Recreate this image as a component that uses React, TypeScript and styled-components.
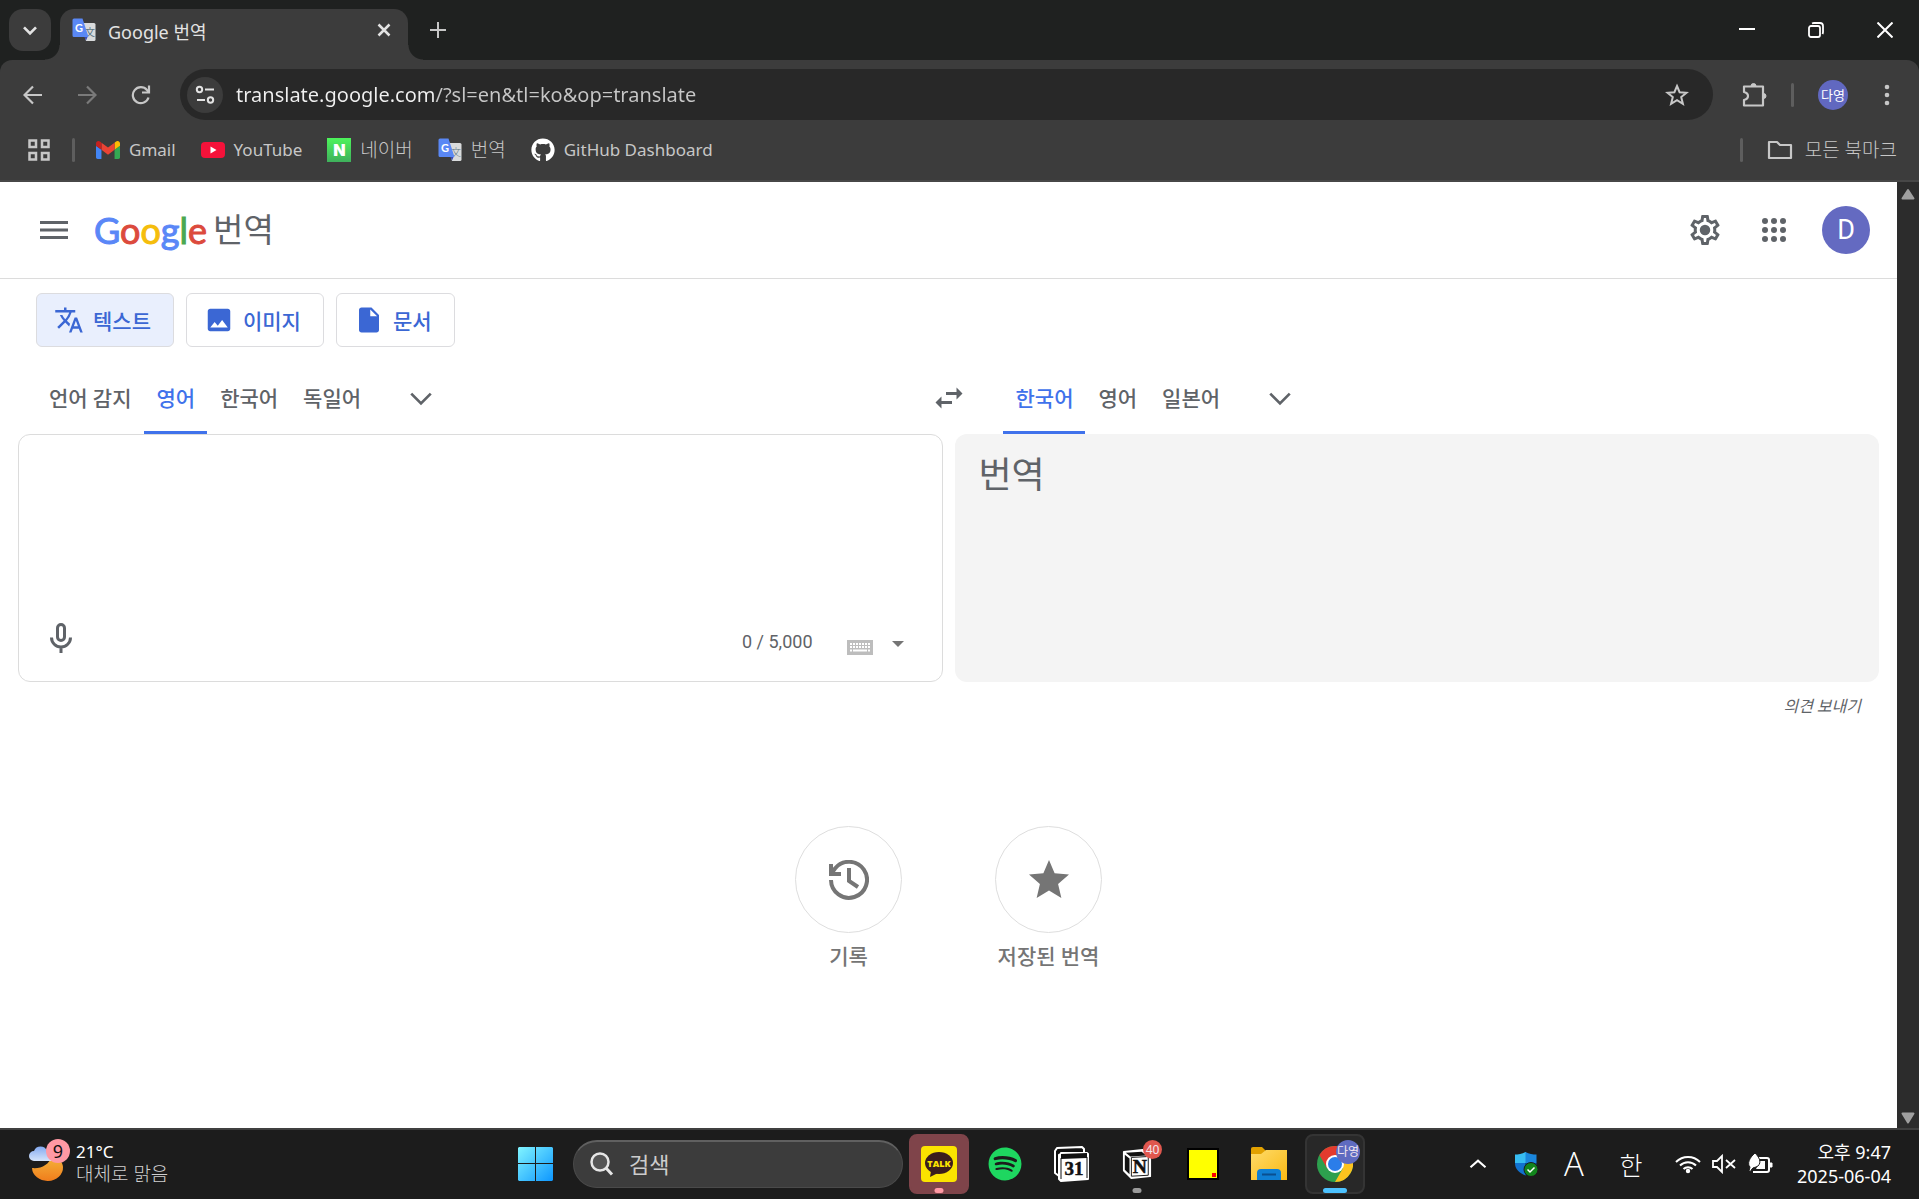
import React from "react";
import styled, { createGlobalStyle, css } from "styled-components";
import { FaGithub, FaSpotify } from "react-icons/fa";
import { MdTranslate, MdImage, MdInsertDriveFile, MdSwapHoriz, MdStar } from "react-icons/md";

const uiFont = `"Noto Sans", "Noto Sans CJK KR", sans-serif`;
const pageFont = `Roboto, "Noto Sans CJK KR", sans-serif`;

const GlobalStyle = createGlobalStyle`
  * { box-sizing: border-box; }
  body { margin: 0; background: #fff; font-family: ${pageFont}; }
  button, input, textarea { font: inherit; }
  svg { display: block; flex: none; }
`;

const Screen = styled.div`
  display: flex;
  flex-direction: column;
  height: 100vh;
`;

const plainButton = css`
  display: flex;
  align-items: center;
  justify-content: center;
  padding: 0;
  border: 0;
  background: none;
  color: inherit;
  cursor: pointer;
`;

/* ---------- browser chrome ---------- */

const TabStrip = styled.div`
  display: flex;
  align-items: flex-start;
  height: 60px;
  padding-left: 9px;
  background: #1f2120;
  color: #e3e3e3;
  font-family: ${uiFont};
`;

const TabSearch = styled.button`
  ${plainButton}
  width: 42px;
  height: 42px;
  margin: 9px 9px 0 0;
  border-radius: 14px;
  background: #3c3c3c;
`;

const Tab = styled.div`
  position: relative;
  display: flex;
  align-items: center;
  width: 348px;
  height: 51px;
  margin-top: 9px;
  padding: 0 12px 9px 12px;
  border-radius: 14px 14px 0 0;
  background: #3c3c3c;
  &::before,
  &::after {
    content: "";
    position: absolute;
    bottom: 0;
    width: 15px;
    height: 15px;
  }
  &::before {
    left: -15px;
    background: radial-gradient(circle at 0 0, transparent 14px, #3c3c3c 15px);
  }
  &::after {
    right: -15px;
    background: radial-gradient(circle at 100% 0, transparent 14px, #3c3c3c 15px);
  }
`;

const TabTitle = styled.span`
  flex: 1;
  margin-left: 12px;
  padding-top: 3px;
  font-size: 18px;
  line-height: 24px;
`;

const TabButton = styled.button`
  ${plainButton}
  width: 24px;
  height: 24px;
`;

const NewTab = styled.button`
  ${plainButton}
  width: 42px;
  height: 42px;
  margin: 9px 0 0 9px;
`;

const WindowControls = styled.div`
  display: flex;
  margin-left: auto;
  color: #fff;
`;

const WindowButton = styled.button`
  ${plainButton}
  width: 69px;
  height: 59px;
`;

const Chrome = styled.div`
  background: #1f2120;
  font-family: ${uiFont};
`;

const ChromeInner = styled.div`
  border-bottom: 2px solid #474747;
  border-radius: 12px 12px 0 0;
  background: #3c3c3c;
  color: #c7c7c7;
`;

const AddressRow = styled.div`
  display: flex;
  align-items: center;
  height: 69px;
  padding: 0 26px 0 6px;
`;

const NavButton = styled.button<{ $dim?: boolean }>`
  ${plainButton}
  width: 54px;
  height: 42px;
  color: ${(p) => (p.$dim ? "#7a7a7a" : "#c7c7c7")};
`;

const Omnibox = styled.label`
  display: flex;
  flex: 1;
  align-items: center;
  height: 51px;
  margin: 0 29px 0 12px;
  padding: 0 24px 0 7px;
  border-radius: 26px;
  background: #282828;
`;

const SiteInfo = styled.button`
  ${plainButton}
  width: 36px;
  height: 36px;
  border-radius: 50%;
  background: #3c3c3c;
`;

const Address = styled.input`
  flex: 1;
  margin: 0 0 0 13px;
  padding: 0;
  border: 0;
  outline: 0;
  background: linear-gradient(90deg, #f0f0f0 199px, #c7c7c7 199px);
  background-clip: text;
  -webkit-background-clip: text;
  color: transparent;
  font-size: 20px;
  line-height: 30px;
`;

const IconButton = styled.button<{ $w: number }>`
  ${plainButton}
  width: ${(p) => p.$w}px;
  height: 42px;
`;

const Divider = styled.span<{ $left?: number; $right?: number }>`
  width: 3px;
  height: 24px;
  margin-left: ${(p) => p.$left ?? 0}px;
  margin-right: ${(p) => p.$right ?? 0}px;
  border-radius: 2px;
  background: #5e5e5e;
`;

const ProfileChip = styled.button`
  ${plainButton}
  width: 30px;
  height: 30px;
  margin-right: 33px;
  border-radius: 50%;
  background: #6168c0;
  color: #fff;
  font-size: 13px;
`;

const BookmarkBar = styled.nav`
  display: flex;
  align-items: center;
  height: 51px;
  padding: 0 22px 9px 27px;
`;

const Bookmarks = styled.div`
  display: flex;
  gap: 25px;
  margin-right: auto;
`;

const Bookmark = styled.a<{ $korean?: boolean }>`
  display: flex;
  align-items: center;
  gap: 9px;
  color: #c7c7c7;
  font-size: ${(p) => (p.$korean ? 19 : 17)}px;
  font-weight: ${(p) => (p.$korean ? 300 : 400)};
  line-height: 24px;
  text-decoration: none;
`;

const NaverMark = styled.span`
  display: grid;
  place-items: center;
  width: 24px;
  height: 24px;
  background: linear-gradient(#4df45b, #3fb05c);
  color: #fff;
  font: 900 16px/24px Inter, sans-serif;
`;

const AllBookmarks = styled.button`
  ${plainButton}
  gap: 12px;
  font-size: 19px;
  font-weight: 300;
  line-height: 24px;
`;

/* ---------- translate page ---------- */

const Viewport = styled.div`
  display: flex;
  flex: 1;
  min-height: 0;
`;

const Page = styled.div`
  flex: 1;
  background: #fff;
  color: #5f6368;
`;

const ScrollTrack = styled.div`
  display: flex;
  flex-direction: column;
  align-items: center;
  justify-content: space-between;
  width: 22px;
  padding: 6px 0 4px;
  background: #2c2c2c;
`;

const Header = styled.header`
  display: flex;
  align-items: center;
  height: 97px;
  padding: 0 27px 0 36px;
  border-bottom: 1px solid #dcdcdc;
`;

const MenuButton = styled.button`
  ${plainButton}
  width: 36px;
  height: 36px;
`;

const Brand = styled.a`
  display: flex;
  align-items: center;
  gap: 6px;
  margin: 0 auto 0 22px;
  color: #5f6368;
  text-decoration: none;
`;

const GoogleWord = styled.span`
  font: 400 36px/48px Lato, sans-serif;
  -webkit-text-stroke: 1px currentColor;
  color: #5a87f7;
`;

const Tint = styled.span<{ $c: string }>`
  color: ${(p) => p.$c};
`;

const ProductName = styled.span`
  padding-top: 2px;
  font-size: 33px;
  line-height: 48px;
`;

const HeaderButton = styled.button`
  ${plainButton}
  width: 69px;
  height: 60px;
`;

const Account = styled.button`
  ${plainButton}
  width: 48px;
  height: 48px;
  margin-left: 14px;
  border-radius: 50%;
  background: #646ac1;
  color: #fff;
  font-size: 27px;
`;

const ModeRow = styled.div`
  display: flex;
  gap: 12px;
  padding: 14px 36px 0;
`;

const ModeButton = styled.button<{ $active?: boolean }>`
  ${plainButton}
  gap: 9px;
  height: 54px;
  padding: 0 22px 0 17px;
  border: 1px solid #dcdcdf;
  border-radius: 6px;
  background: ${(p) => (p.$active ? "#e9effd" : "#fff")};
  color: #3b67d4;
  font-size: 21px;
  font-weight: 500;
`;

const LanguageRow = styled.div`
  display: grid;
  grid-template-columns: 1fr 108px 1fr;
  height: 72px;
  margin-top: 15px;
`;

const LanguageList = styled.div<{ $first?: boolean }>`
  display: flex;
  padding-left: ${(p) => (p.$first ? 36 : 0)}px;
`;

const Language = styled.button<{ $active?: boolean }>`
  ${plainButton}
  padding: 0 12px 0 13px;
  border-bottom: 3px solid ${(p) => (p.$active ? "#4072eb" : "transparent")};
  color: ${(p) => (p.$active ? "#4072eb" : "#5f6368")};
  font-size: 21px;
  font-weight: 500;
`;

const MoreLanguages = styled.button`
  ${plainButton}
  width: 72px;
  margin-left: 12px;
`;

const Swap = styled.button`
  ${plainButton}
`;

const Panels = styled.div`
  display: grid;
  grid-template-columns: 1fr 1fr;
  gap: 12px;
  padding: 0 18px;
`;

const Source = styled.section`
  display: flex;
  flex-direction: column;
  height: 248px;
  border: 1px solid #dcdcdc;
  border-radius: 12px;
`;

const SourceText = styled.textarea`
  flex: 1;
  margin: 0;
  padding: 12px 24px;
  border: 0;
  outline: 0;
  border-radius: 12px;
  resize: none;
  background: none;
  font-size: 36px;
`;

const SourceTools = styled.div`
  display: flex;
  align-items: center;
  height: 80px;
  padding: 0 24px 0 15px;
`;

const MicButton = styled.button`
  ${plainButton}
  width: 54px;
  height: 54px;
  margin: 0 auto 6px 0;
`;

const Counter = styled.span`
  margin-right: 29px;
  padding-top: 2px;
  font-size: 18px;
  line-height: 24px;
`;

const InputTools = styled.div`
  display: flex;
  padding-top: 12px;
`;

const ToolButton = styled.button<{ $w: number }>`
  ${plainButton}
  width: ${(p) => p.$w}px;
  height: 36px;
`;

const Target = styled.section`
  padding: 18px 24px;
  border-radius: 12px;
  background: #f4f4f4;
  font-size: 36px;
  line-height: 48px;
`;

const FeedbackRow = styled.div`
  display: flex;
  align-items: center;
  justify-content: flex-end;
  height: 48px;
  padding: 2px 36px 0 0;
`;

const Feedback = styled.a`
  color: #5f6368;
  font-size: 16px;
  font-style: italic;
  line-height: 24px;
  text-decoration: none;
`;

const Shortcuts = styled.div`
  display: flex;
  justify-content: center;
  padding-top: 96px;
`;

const Shortcut = styled.button`
  ${plainButton}
  flex-direction: column;
  gap: 8px;
  width: 200px;
  color: #757575;
  font-size: 21px;
  font-weight: 500;
  line-height: 32px;
`;

const Disc = styled.span`
  display: grid;
  place-items: center;
  width: 107px;
  height: 107px;
  border: 1px solid #dedede;
  border-radius: 50%;
`;

/* ---------- desktop taskbar ---------- */

const Taskbar = styled.footer`
  display: grid;
  grid-template-columns: 1fr auto 554px;
  align-items: center;
  height: 71px;
  padding-bottom: 2px;
  border-top: 2px solid #404040;
  background: #1c1c1c;
  color: #fff;
  font-family: ${uiFont};
  font-size: 18px;
`;

const Weather = styled.button`
  ${plainButton}
  justify-content: flex-start;
  gap: 6px;
  padding: 0 0 2px 26px;
  text-align: left;
  font-size: 17px;
  line-height: 23px;
`;

const WeatherIcon = styled.span`
  position: relative;
  width: 44px;
  height: 48px;
  padding-top: 7px;
`;

const CountBadge = styled.span`
  position: absolute;
  top: 0;
  right: 0;
  width: 24px;
  height: 24px;
  border-radius: 50%;
  background: #ff99a4;
  color: #111;
  font-size: 18px;
  line-height: 24px;
  text-align: center;
`;

const Lines = styled.span`
  display: flex;
  flex-direction: column;
`;

const Muted = styled.span`
  color: #d0d0d0;
  font-size: 19px;
  font-weight: 300;
`;

const Apps = styled.div`
  display: flex;
  align-items: center;
  gap: 6px;
`;

const SearchBox = styled.label`
  display: flex;
  align-items: center;
  gap: 15px;
  width: 330px;
  height: 48px;
  margin-left: 1px;
  padding: 0 16px;
  border: 1px solid #4a4a4a;
  border-top: 2px solid #606060;
  border-radius: 24px;
  background: #3c3c3c;
`;

const SearchInput = styled.input`
  width: 100%;
  padding: 0;
  border: 0;
  outline: 0;
  background: none;
  color: #fff;
  font-size: 22px;
  line-height: 30px;
  &::placeholder {
    color: #cccccc;
    opacity: 1;
  }
`;

const AppTile = styled.button<{ $bg?: string; $edge?: string }>`
  ${plainButton}
  position: relative;
  width: 60px;
  height: 60px;
  border: 2px solid ${(p) => p.$edge ?? "transparent"};
  border-radius: 8px;
  background: ${(p) => p.$bg ?? "none"};
`;

const Indicator = styled.span<{ $w: number; $c: string }>`
  position: absolute;
  bottom: -1px;
  left: 50%;
  width: ${(p) => p.$w}px;
  height: 5px;
  border-radius: 3px;
  background: ${(p) => p.$c};
  transform: translateX(-50%);
`;

const AppBadge = styled.span<{ $bg: string; $size: number }>`
  position: absolute;
  top: 4px;
  right: 3px;
  width: ${(p) => p.$size}px;
  height: ${(p) => p.$size}px;
  border-radius: 50%;
  background: ${(p) => p.$bg};
  color: #f3e6ee;
  font-size: 12px;
  line-height: ${(p) => p.$size}px;
  text-align: center;
`;

const Tray = styled.div`
  display: flex;
  align-items: center;
  justify-content: flex-end;
  padding-right: 28px;
`;

const TrayButton = styled.button<{ $w: number }>`
  ${plainButton}
  width: ${(p) => p.$w}px;
  height: 48px;
`;

const Latin = styled.span`
  font: 300 33px/48px "Open Sans", sans-serif;
`;

const Hangul = styled.span`
  font: 300 25px/48px "Noto Sans CJK KR", sans-serif;
`;

const Clock = styled.button`
  ${plainButton}
  flex-direction: column;
  align-items: flex-end;
  width: 107px;
  font-size: 18px;
  line-height: 24px;
`;

/* ---------- drawings ---------- */

const Chevron = ({ size, w, up }: { size: number; w: number; up?: boolean }) => (
  <svg width={size} height={size} viewBox="0 0 24 24" fill="none" stroke="currentColor" strokeWidth={w}>
    <path d={up ? "M3 16l9-8 9 8" : "M3 8l9 9 9-9"} />
  </svg>
);

const TranslateMark = () => (
  <svg width="24" height="24" viewBox="0 0 24 24">
    <path d="M9 5h13a1.500 1.500 0 0 1 1.500 1.500v15a1.500 1.500 0 0 1-1.500 1.500H14z" fill="#d9dbdc" />
    <text x="13" y="18" fontSize="10" fill="#5d7580" fontFamily="Noto Sans CJK KR">文</text>
    <path d="M12 18l4 0-2 4.500z" fill="#3a4bb5" />
    <path d="M2 .5h8.500L16.500 19H2A1.500 1.500 0 0 1 .5 17.500V2A1.500 1.500 0 0 1 2 .5z" fill="#5a88f5" />
    <text x="3" y="13.500" fontSize="11" fontWeight="700" fill="#fff" fontFamily="Lato">G</text>
  </svg>
);

const GmailMark = () => (
  <svg width="24" height="18" viewBox="52 42 88 66">
    <path fill="#4285f4" d="M58 108h14V74L52 59v43c0 3.320 2.690 6 6 6" />
    <path fill="#34a853" d="M120 108h14c3.320 0 6-2.690 6-6V59l-20 15" />
    <path fill="#fbbc04" d="M120 48v26l20-15v-8c0-7.420-8.470-11.650-14.400-7.200" />
    <path fill="#ea4335" d="M72 74V48l24 18 24-18v26L96 92" />
    <path fill="#c5221f" d="M52 51v8l20 15V48l-5.600-4.200c-5.940-4.450-14.400-.22-14.400 7.200" />
  </svg>
);

const YouTubeMark = () => (
  <svg width="24" height="18" viewBox="0 0 24 18">
    <rect y="1" width="24" height="16" rx="4" fill="#f5123a" />
    <path d="M9.500 5.500v7l6-3.500z" fill="#fff" />
  </svg>
);

const GearIcon = () => (
  <svg width="36" height="36" viewBox="0 0 24 24" fill="currentColor">
    <path d="M19.430 12.980c.04-.32.07-.64.07-.98 0-.34-.03-.66-.07-.98l2.110-1.650c.19-.15.24-.42.12-.64l-2-3.460c-.09-.16-.26-.25-.44-.25-.06 0-.12.01-.17.03l-2.490 1c-.52-.4-1.080-.73-1.690-.98l-.38-2.650C14.460 2.180 14.250 2 14 2h-4c-.25 0-.46.18-.49.42l-.38 2.650c-.61.25-1.170.59-1.690.98l-2.490-1c-.06-.02-.12-.03-.18-.03-.17 0-.34.09-.43.25l-2 3.460c-.13.22-.07.49.12.64l2.110 1.650c-.04.32-.07.65-.07.98 0 .33.03.66.07.98l-2.110 1.650c-.19.15-.24.42-.12.64l2 3.460c.09.16.26.25.44.25.06 0 .12-.01.17-.03l2.490-1c.52.4 1.080.73 1.690.98l.38 2.650c.03.24.24.42.49.42h4c.25 0 .46-.18.49-.42l.38-2.650c.61-.25 1.170-.59 1.690-.98l2.490 1c.06.02.12.03.18.03.17 0 .34-.09.43-.25l2-3.460c.12-.22.07-.49-.12-.64l-2.110-1.650zm-1.980-1.710c.04.31.05.52.05.73 0 .21-.02.43-.05.73l-.14 1.130.89.7 1.080.84-.7 1.210-1.270-.51-1.040-.42-.9.68c-.43.32-.84.56-1.250.73l-1.060.43-.16 1.130-.2 1.350h-1.400l-.19-1.350-.16-1.130-1.060-.43c-.43-.18-.83-.41-1.230-.71l-.91-.7-1.060.43-1.270.51-.7-1.210 1.080-.84.89-.7-.14-1.130c-.03-.31-.05-.54-.05-.74s.02-.43.05-.73l.14-1.130-.89-.7-1.080-.84.7-1.210 1.270.51 1.040.42.9-.68c.43-.32.84-.56 1.250-.73l1.060-.43.16-1.130.2-1.350h1.390l.19 1.350.16 1.130 1.060.43c.43.18.83.41 1.230.71l.91.7 1.060-.43 1.270-.51.7 1.210-1.070.85-.89.7.14 1.130z" />
    <circle cx="12" cy="12" r="3.500" />
  </svg>
);

const AppsIcon = () => (
  <svg width="24" height="24" viewBox="0 0 24 24" fill="currentColor">
    {[3, 12, 21].map((y) => [3, 12, 21].map((x) => <circle key={`${x}-${y}`} cx={x} cy={y} r="3" />))}
  </svg>
);

const MicIcon = () => (
  <svg width="24" height="30" viewBox="0 0 24 30" fill="none" stroke="currentColor" strokeWidth="3">
    <rect x="8.500" y="1.500" width="7" height="16" rx="3.500" />
    <path d="M2.500 14.500a9.500 9.500 0 0 0 19 0M12 24v6" />
  </svg>
);

const HistoryIcon = () => (
  <svg width="40" height="40" viewBox="0 0 40 40" fill="none" stroke="currentColor" strokeWidth="4">
    <path d="M2 20a18 18 0 1 0 4-11.500L2 14" />
    <path d="M2 4v10h10M20 8v13l9 6" />
  </svg>
);

const KeyboardIcon = () => (
  <svg width="26" height="15" viewBox="0 0 26 15">
    <rect width="26" height="15" fill="#bdbdbd" />
    <path d="M3 4h20M3 7h20" stroke="#fff" strokeWidth="2" strokeDasharray="2 1" />
    <path d="M3 10.500h2M6 10.500h14M21 10.500h2" stroke="#fff" strokeWidth="2" />
  </svg>
);

const WeatherArt = () => (
  <svg width="40" height="38" viewBox="0 0 40 38">
    <defs>
      <linearGradient id="moon" x1="0" y1="0" x2="0" y2="1">
        <stop offset="0" stopColor="#f4b63c" />
        <stop offset="1" stopColor="#f07d1c" />
      </linearGradient>
      <linearGradient id="cloud" x1="0" y1="0" x2="0" y2="1">
        <stop offset="0" stopColor="#84aaf0" />
        <stop offset="1" stopColor="#d5e4fb" />
      </linearGradient>
    </defs>
    <path d="M6 22c9 1 17-3 20-12 7 1 11 7 11 11a15 13 0 0 1-31 1z" fill="url(#moon)" />
    <path d="M8 15a5 5 0 0 1 0-10 7 7 0 0 1 13 0 5 5 0 0 1 4 10z" fill="url(#cloud)" />
  </svg>
);

const WindowsMark = () => (
  <svg width="36" height="36" viewBox="0 0 36 36">
    <defs>
      <linearGradient id="win" gradientUnits="userSpaceOnUse" x1="0" y1="0" x2="36" y2="36">
        <stop offset="0" stopColor="#83f6ff" />
        <stop offset="1" stopColor="#0a94ff" />
      </linearGradient>
    </defs>
    <path d="M1 1h16v16H0V2zM18 1h16l1 1v15H18zM0 18h17v17H1l-1-1zM18 18h17v16l-1 1H18z" fill="url(#win)" />
  </svg>
);

const TalkMark = () => (
  <svg width="36" height="36" viewBox="0 0 36 36">
    <rect width="36" height="36" rx="4" fill="#fbe300" />
    <ellipse cx="18" cy="17" rx="14" ry="11" fill="#3b1d1d" />
    <path d="M10 25l-1 6 8-4z" fill="#3b1d1d" />
    <text x="18" y="20.500" fontSize="9" fontWeight="800" textAnchor="middle" fill="#fbe300" fontFamily="Open Sans">TALK</text>
  </svg>
);

const CalendarMark = () => (
  <svg width="36" height="36" viewBox="0 0 36 36">
    <path d="M4 2l25-1 2 2v4H8L6 30l-4-3V5z" fill="#111" stroke="#fff" strokeWidth="2" strokeLinejoin="round" />
    <path d="M8 8l26-1 1 1v25l-27 2-2-2V9z" fill="#fff" stroke="#fff" strokeWidth="2" strokeLinejoin="round" />
    <path d="M8 8l26-1v5L8 13z" fill="#111" />
    <path d="M8 12v21M34 11v21" stroke="#111" strokeWidth="1" />
    <text x="21" y="29" fontSize="19" fontWeight="700" textAnchor="middle" fill="#111" stroke="#111" strokeWidth=".5" fontFamily="Liberation Serif">31</text>
  </svg>
);

const NotionMark = () => (
  <svg width="30" height="30" viewBox="0 0 32 32">
    <path d="M2 3l20-2 8 6v22l-20 2-8-8z" fill="#fff" stroke="#fff" strokeWidth="2" strokeLinejoin="round" />
    <path d="M4 4l17-1 5 4-17 1zM3 6l5 4v17l-5-5z" fill="#111" />
    <path d="M10 9l18-1v20l-18 1z" fill="#fff" stroke="#111" strokeWidth="1" />
    <text x="19" y="26" fontSize="21" fontWeight="700" textAnchor="middle" fill="#111" stroke="#111" strokeWidth=".5" fontFamily="Liberation Serif">N</text>
  </svg>
);

const NoteMark = () => (
  <svg width="32" height="32" viewBox="0 0 32 32">
    <rect width="32" height="32" fill="#000" />
    <rect x="2" y="2" width="28" height="28" fill="#ffff00" />
    <rect x="25" y="25" width="4" height="4" fill="#f00" />
  </svg>
);

const FolderMark = () => (
  <svg width="36" height="34" viewBox="0 0 36 34">
    <defs>
      <linearGradient id="folder" x1="0" y1="0" x2="1" y2="1">
        <stop offset="0" stopColor="#ffdc6a" />
        <stop offset="1" stopColor="#f9b813" />
      </linearGradient>
    </defs>
    <path d="M0 1.500Q0 0 2 0h9l4 4v6H0z" fill="#e2a100" />
    <path d="M0 7h10l5-4h21v30H0z" fill="url(#folder)" />
    <path d="M6 33v-7q0-4 4-4h16q4 0 4 4v7z" fill="#0f7fd4" />
    <path d="M11 27.500h14" stroke="#0a4f8f" strokeWidth="2" />
  </svg>
);

const ChromeMark = () => (
  <svg width="36" height="36" viewBox="0 0 36 36">
    <circle cx="18" cy="18" r="18" fill="#2da04e" />
    <path d="M18 18L2.400 9A18 18 0 0 1 33.600 9H18z" fill="#e33b2e" />
    <path d="M2.400 9l7.800 13.500L18 9z" fill="#e33b2e" />
    <path d="M18 9h15.600A18 18 0 0 1 18 36l7.800-13.500z" fill="#fcc31e" />
    <circle cx="18" cy="18" r="9" fill="#fff" />
    <circle cx="18" cy="18" r="7" fill="#2b7de9" />
  </svg>
);

const ShieldMark = () => (
  <svg width="24" height="26" viewBox="0 0 24 26">
    <path d="M11.500 1C8 3 4 3.500 1 3.500V12h11V1z" fill="#37bdf2" />
    <path d="M11.500 1C15 3 19 3.500 22.500 3.500V12h-11z" fill="#1a86dc" />
    <path d="M1 12h10.500v12.500C5 22 1 18 1 12z" fill="#1272cf" />
    <path d="M11.500 12h11c0 6-4 10-11 12.500z" fill="#0c59a4" />
    <circle cx="17" cy="18.500" r="7" fill="#12851c" stroke="#1c1c1c" />
    <path d="M13.500 18.500l2.500 2.500 4.500-4.500" stroke="#fff" strokeWidth="1.500" fill="none" />
  </svg>
);

const WifiIcon = () => (
  <svg width="26" height="20" viewBox="0 0 26 20" fill="none" stroke="#fff" strokeWidth="2">
    <path d="M1 8a17 17 0 0 1 24 0M5 11.500a11.500 11.500 0 0 1 16 0M8.500 15a6.500 6.500 0 0 1 9 0" />
    <circle cx="13" cy="17" r="1.200" fill="#fff" />
  </svg>
);

const MutedIcon = () => (
  <svg width="24" height="20" viewBox="0 0 24 20" fill="none" stroke="#fff" strokeWidth="1.800">
    <path d="M1 7v6h4l5 5V2L5 7zM14 6l9 8M23 6l-9 8" />
  </svg>
);

const BatteryIcon = () => (
  <svg width="26" height="22" viewBox="0 0 26 22">
    <path d="M12 5h8q2 0 2 2v10q0 2-2 2H6" fill="none" stroke="#fff" strokeWidth="2" />
    <path d="M23 10h2v4h-2z" fill="#fff" stroke="#fff" />
    <path d="M13 8h5v8H9z" fill="#fff" />
    <path d="M8 0c4 4 7 9 3 13-3 2-5 1-6 3l-2 3-1-1 1-4C0 11 2 5 8 0z" fill="#fff" stroke="#1c1c1c" />
  </svg>
);

const bookmarks = [
  { name: "Gmail", icon: <GmailMark /> },
  { name: "YouTube", icon: <YouTubeMark /> },
  { name: "네이버", korean: true, icon: <NaverMark aria-hidden>N</NaverMark> },
  { name: "번역", korean: true, icon: <TranslateMark /> },
  { name: "GitHub Dashboard", icon: <FaGithub size={24} color="#fff" /> },
];

function BrowserChrome() {
  return (
    <>
      <TabStrip>
        <TabSearch aria-label="탭 검색"><Chevron size={16} w={4} /></TabSearch>
        <Tab>
          <TranslateMark />
          <TabTitle>Google 번역</TabTitle>
          <TabButton aria-label="탭 닫기">
            <svg width="14" height="14" viewBox="0 0 14 14" stroke="currentColor" strokeWidth="2.500"><path d="M1.500 1.500l11 11M12.500 1.500l-11 11" /></svg>
          </TabButton>
        </Tab>
        <NewTab aria-label="새 탭">
          <svg width="16" height="16" viewBox="0 0 16 16" stroke="#c7c7c7" strokeWidth="2"><path d="M8 0v16M0 8h16" /></svg>
        </NewTab>
        <WindowControls>
          <WindowButton aria-label="최소화">
            <svg width="16" height="16" viewBox="0 0 16 16" stroke="currentColor" strokeWidth="2"><path d="M0 7h16" /></svg>
          </WindowButton>
          <WindowButton aria-label="이전 크기로 복원">
            <svg width="16" height="16" viewBox="0 0 16 16" fill="none" stroke="currentColor" strokeWidth="1.800">
              <rect x="1" y="4" width="11" height="11" rx="2" />
              <path d="M4 1.500Q5 1 6 1h6q3 0 3 3v6q0 1-.5 2" />
            </svg>
          </WindowButton>
          <WindowButton aria-label="닫기">
            <svg width="16" height="16" viewBox="0 0 16 16" stroke="currentColor" strokeWidth="2"><path d="M.5.5l15 15M15.500.5l-15 15" /></svg>
          </WindowButton>
        </WindowControls>
      </TabStrip>
      <Chrome>
        <ChromeInner>
          <AddressRow>
            <NavButton aria-label="뒤로">
              <svg width="20" height="20" viewBox="0 0 20 20" fill="none" stroke="currentColor" strokeWidth="2.200"><path d="M19 10H2M10 1.500L1.500 10l8.500 8.500" /></svg>
            </NavButton>
            <NavButton $dim aria-label="앞으로">
              <svg width="20" height="20" viewBox="0 0 20 20" fill="none" stroke="currentColor" strokeWidth="2.200"><path d="M1 10h17M10 1.500l8.500 8.500-8.500 8.500" /></svg>
            </NavButton>
            <NavButton aria-label="새로고침">
              <svg width="20" height="20" viewBox="0 0 20 20" fill="none" stroke="currentColor" strokeWidth="2.200"><path d="M17.500 12.500A8 8 0 1 1 16 5l2 2M18 .5V7.500H11" /></svg>
            </NavButton>
            <Omnibox>
              <SiteInfo aria-label="사이트 정보">
                <svg width="20" height="20" viewBox="0 0 20 20" fill="none" stroke="#e3e3e3" strokeWidth="2">
                  <circle cx="4.500" cy="4.500" r="2.700" /><path d="M10 4.500h9M2 15h8" /><circle cx="15.500" cy="15" r="2.700" />
                </svg>
              </SiteInfo>
              <Address aria-label="주소창" defaultValue="translate.google.com/?sl=en&tl=ko&op=translate" />
              <TabButton aria-label="북마크에 추가">
                <svg width="24" height="24" viewBox="0 0 24 24" fill="none" stroke="currentColor" strokeWidth="2"><path d="M12 3l2.600 6.200 6.900.5-5.300 4.400 1.700 6.700L12 17.200l-5.900 3.600 1.700-6.700L2.500 9.700l6.900-.5z" /></svg>
              </TabButton>
            </Omnibox>
            <IconButton $w={24} aria-label="확장 프로그램">
              <svg width="26" height="26" viewBox="0 0 26 26" fill="none" stroke="currentColor" strokeWidth="2.200" strokeLinejoin="round">
                <path d="M3 4.500h19v19H3v-5.500q4-1 4-4t-4-4z" />
                <path d="M10 4a2.500 2.500 0 0 1 5 0zM22.500 11.500a2.500 2.500 0 0 1 0 5z" fill="currentColor" stroke="currentColor" strokeWidth="1" />
              </svg>
            </IconButton>
            <Divider $left={25} $right={24} />
            <ProfileChip>다영</ProfileChip>
            <IconButton $w={12} aria-label="메뉴">
              <svg width="6" height="22" viewBox="0 0 6 22" fill="currentColor"><circle cx="3" cy="3" r="2.300" /><circle cx="3" cy="11" r="2.300" /><circle cx="3" cy="19" r="2.300" /></svg>
            </IconButton>
          </AddressRow>
          <BookmarkBar>
            <IconButton $w={24} aria-label="탭 그룹">
              <svg width="22" height="22" viewBox="0 0 22 22" fill="none" stroke="currentColor" strokeWidth="2.500">
                <path d="M1.500 1.500h6.500v6.500H1.500zM14 1.500h6.500v6.500H14zM1.500 14h6.500v6.500H1.500zM14 14h6.500v6.500H14z" />
              </svg>
            </IconButton>
            <Divider $left={21} $right={21} />
            <Bookmarks>
              {bookmarks.map((b) => (
                <Bookmark key={b.name} href="#" $korean={b.korean}>{b.icon}<span>{b.name}</span></Bookmark>
              ))}
            </Bookmarks>
            <Divider $right={24} />
            <AllBookmarks>
              <svg width="26" height="20" viewBox="0 0 26 20" fill="none" stroke="currentColor" strokeWidth="2.200" strokeLinejoin="round"><path d="M2 2h8l3 3h11v13H2z" /></svg>
              모든 북마크
            </AllBookmarks>
          </BookmarkBar>
        </ChromeInner>
      </Chrome>
    </>
  );
}

function TranslatePage() {
  return (
    <Page>
      <Header>
        <MenuButton aria-label="기본 메뉴">
          <svg width="28" height="18" viewBox="0 0 28 18" stroke="currentColor" strokeWidth="3"><path d="M0 1.500h28M0 9h28M0 16.500h28" /></svg>
        </MenuButton>
        <Brand href="#">
          <GoogleWord>
            G<Tint $c="#dc4a3d">o</Tint><Tint $c="#f5bd0c">o</Tint>g<Tint $c="#4aa851">l</Tint><Tint $c="#dc4a3d">e</Tint>
          </GoogleWord>
          <ProductName>번역</ProductName>
        </Brand>
        <HeaderButton aria-label="설정"><GearIcon /></HeaderButton>
        <HeaderButton aria-label="Google 앱"><AppsIcon /></HeaderButton>
        <Account aria-label="Google 계정">D</Account>
      </Header>
      <ModeRow>
        <ModeButton $active><MdTranslate size={30} />텍스트</ModeButton>
        <ModeButton><MdImage size={30} />이미지</ModeButton>
        <ModeButton><MdInsertDriveFile size={30} />문서</ModeButton>
      </ModeRow>
      <LanguageRow>
        <LanguageList $first>
          <Language>언어 감지</Language>
          <Language $active>영어</Language>
          <Language>한국어</Language>
          <Language>독일어</Language>
          <MoreLanguages aria-label="출발어 더보기"><Chevron size={26} w={2.5} /></MoreLanguages>
        </LanguageList>
        <Swap aria-label="언어 전환"><MdSwapHoriz size={36} /></Swap>
        <LanguageList>
          <Language $active>한국어</Language>
          <Language>영어</Language>
          <Language>일본어</Language>
          <MoreLanguages aria-label="도착어 더보기"><Chevron size={26} w={2.5} /></MoreLanguages>
        </LanguageList>
      </LanguageRow>
      <Panels>
        <Source>
          <SourceText aria-label="원본 텍스트" />
          <SourceTools>
            <MicButton aria-label="음성으로 번역"><MicIcon /></MicButton>
            <Counter>0 / 5,000</Counter>
            <InputTools>
              <ToolButton $w={36} aria-label="입력 도구"><KeyboardIcon /></ToolButton>
              <ToolButton $w={40} aria-label="입력 도구 선택">
                <svg width="12" height="12" viewBox="0 0 12 12" fill="#757575"><path d="M0 0h12L6 6z" /></svg>
              </ToolButton>
            </InputTools>
          </SourceTools>
        </Source>
        <Target>번역</Target>
      </Panels>
      <FeedbackRow><Feedback href="#">의견 보내기</Feedback></FeedbackRow>
      <Shortcuts>
        <Shortcut><Disc><HistoryIcon /></Disc>기록</Shortcut>
        <Shortcut><Disc><MdStar size={48} /></Disc>저장된 번역</Shortcut>
      </Shortcuts>
    </Page>
  );
}

function DesktopTaskbar() {
  return (
    <Taskbar>
      <Weather>
        <WeatherIcon><WeatherArt /><CountBadge>9</CountBadge></WeatherIcon>
        <Lines><span>21°C</span><Muted>대체로 맑음</Muted></Lines>
      </Weather>
      <Apps>
        <AppTile aria-label="시작"><WindowsMark /></AppTile>
        <SearchBox>
          <svg width="24" height="24" viewBox="0 0 24 24" fill="none" stroke="#e6e6e6">
            <circle cx="10" cy="10" r="8.500" strokeWidth="2.500" fill="#555" /><path d="M16 16l6 6.500" strokeWidth="3" />
          </svg>
          <SearchInput aria-label="검색" placeholder="검색" />
        </SearchBox>
        <AppTile $bg="#7f444a" $edge="#7f444a" aria-label="카카오톡"><TalkMark /><Indicator $w={9} $c="#ff99a4" /></AppTile>
        <AppTile aria-label="Spotify"><FaSpotify size={34} color="#1ed760" /></AppTile>
        <AppTile aria-label="캘린더"><CalendarMark /></AppTile>
        <AppTile aria-label="Notion"><NotionMark /><AppBadge $bg="#e0574e" $size={19}>40</AppBadge><Indicator $w={9} $c="#9a9a9a" /></AppTile>
        <AppTile aria-label="메모"><NoteMark /></AppTile>
        <AppTile aria-label="파일 탐색기"><FolderMark /></AppTile>
        <AppTile $bg="#282828" $edge="#343434" aria-label="Chrome"><ChromeMark /><AppBadge $bg="#5f6bc0" $size={24}>다영</AppBadge><Indicator $w={24} $c="#4cc2ff" /></AppTile>
      </Apps>
      <Tray>
        <TrayButton $w={48} aria-label="숨겨진 아이콘 표시"><Chevron size={20} w={2.5} up /></TrayButton>
        <TrayButton $w={48} aria-label="보안"><ShieldMark /></TrayButton>
        <TrayButton $w={48}><Latin>A</Latin></TrayButton>
        <TrayButton $w={66}><Hangul>한</Hangul></TrayButton>
        <TrayButton $w={48} aria-label="네트워크"><WifiIcon /></TrayButton>
        <TrayButton $w={24} aria-label="음소거"><MutedIcon /></TrayButton>
        <TrayButton $w={48} aria-label="배터리"><BatteryIcon /></TrayButton>
        <Clock><span>오후 9:47</span><span>2025-06-04</span></Clock>
      </Tray>
    </Taskbar>
  );
}

export default function App() {
  return (
    <Screen>
      <GlobalStyle />
      <BrowserChrome />
      <Viewport>
        <TranslatePage />
        <ScrollTrack>
          <svg width="14" height="12" viewBox="0 0 14 12" fill="#9f9f9f" stroke="#9f9f9f" strokeWidth="2" strokeLinejoin="round"><path d="M7 2l5.500 8.500h-11z" /></svg>
          <svg width="14" height="12" viewBox="0 0 14 12" fill="#9f9f9f" stroke="#9f9f9f" strokeWidth="2" strokeLinejoin="round"><path d="M7 10.500L12.500 1.500h-11z" /></svg>
        </ScrollTrack>
      </Viewport>
      <DesktopTaskbar />
    </Screen>
  );
}
